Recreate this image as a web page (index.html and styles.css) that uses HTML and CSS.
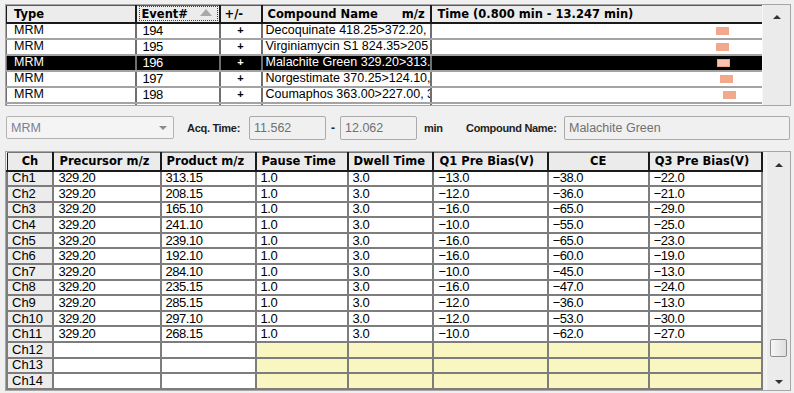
FILE: index.html
```html
<!DOCTYPE html>
<html>
<head>
<meta charset="utf-8">
<link rel="stylesheet" href="styles.css">
</head>
<body>
<div class="app">
  <div class="panel top-panel">
    <div class="grid-wrap">
      <table class="events">
        <colgroup><col class="c-type"><col class="c-event"><col class="c-pm"><col class="c-comp"><col class="c-time"></colgroup>
        <thead>
          <tr>
            <th class="h-type">Type</th>
            <th class="h-event"><span class="focus">Event#<svg class="sort" width="12" height="7" viewBox="0 0 12 7"><path d="M0 7 L6 0 L12 7 Z" fill="#a8a8a8"/></svg></span></th>
            <th class="h-pm">+/-</th>
            <th class="h-comp">Compound Name<span class="mz">m/z</span></th>
            <th class="h-time">Time (0.800 min - 13.247 min)</th>
          </tr>
        </thead>
        <tbody>
          <tr><td class="t">MRM</td><td class="n">194</td><td class="pm">+</td><td class="cp">Decoquinate 418.25&gt;372.20,</td><td class="tm"><div class="bar" style="margin-left:284px"></div></td></tr>
          <tr><td class="t">MRM</td><td class="n">195</td><td class="pm">+</td><td class="cp">Virginiamycin S1 824.35&gt;205</td><td class="tm"><div class="bar" style="margin-left:284px"></div></td></tr>
          <tr class="sel"><td class="t">MRM</td><td class="n">196</td><td class="pm">+</td><td class="cp">Malachite Green 329.20&gt;313.</td><td class="tm"><div class="bar" style="margin-left:285px"></div></td></tr>
          <tr><td class="t">MRM</td><td class="n">197</td><td class="pm">+</td><td class="cp">Norgestimate 370.25&gt;124.10,</td><td class="tm"><div class="bar" style="margin-left:288px"></div></td></tr>
          <tr><td class="t">MRM</td><td class="n">198</td><td class="pm">+</td><td class="cp">Coumaphos 363.00&gt;227.00, 3</td><td class="tm"><div class="bar" style="margin-left:291px"></div></td></tr>
          <tr><td class="t"></td><td class="n"></td><td class="pm"></td><td class="cp"></td><td class="tm"></td></tr>
        </tbody>
      </table>
    </div>
    <div class="vscroll top-scroll">
      <span class="arrow up"></span>
    </div>
  </div>

  <div class="controls">
    <div class="combo"><span class="val">MRM</span><span class="drop"></span></div>
    <span class="lbl lbl-acq">Acq. Time:</span>
    <div class="field f-time">11.562</div>
    <span class="dash">-</span>
    <div class="field f-time">12.062</div>
    <span class="lbl lbl-min">min</span>
    <span class="lbl lbl-cname">Compound Name:</span>
    <div class="field f-name">Malachite Green</div>
  </div>

  <div class="panel bottom-panel">
    <div class="grid-wrap">
      <table class="chans">
        <colgroup><col class="k-ch"><col class="k-pre"><col class="k-pro"><col class="k-pau"><col class="k-dwe"><col class="k-q1"><col class="k-ce"><col class="k-q3"></colgroup>
        <thead>
          <tr>
            <th class="ctr">Ch</th>
            <th>Precursor m/z</th>
            <th>Product m/z</th>
            <th>Pause Time</th>
            <th>Dwell Time</th>
            <th>Q1 Pre Bias(V)</th>
            <th class="ctr">CE</th>
            <th>Q3 Pre Bias(V)</th>
          </tr>
        </thead>
        <tbody>
          <tr><td class="ch">Ch1</td><td>329.20</td><td>313.15</td><td>1.0</td><td>3.0</td><td>−13.0</td><td>−38.0</td><td>−22.0</td></tr>
          <tr><td class="ch">Ch2</td><td>329.20</td><td>208.15</td><td>1.0</td><td>3.0</td><td>−12.0</td><td>−36.0</td><td>−21.0</td></tr>
          <tr><td class="ch">Ch3</td><td>329.20</td><td>165.10</td><td>1.0</td><td>3.0</td><td>−16.0</td><td>−65.0</td><td>−29.0</td></tr>
          <tr><td class="ch">Ch4</td><td>329.20</td><td>241.10</td><td>1.0</td><td>3.0</td><td>−10.0</td><td>−55.0</td><td>−25.0</td></tr>
          <tr><td class="ch">Ch5</td><td>329.20</td><td>239.10</td><td>1.0</td><td>3.0</td><td>−16.0</td><td>−65.0</td><td>−23.0</td></tr>
          <tr><td class="ch">Ch6</td><td>329.20</td><td>192.10</td><td>1.0</td><td>3.0</td><td>−16.0</td><td>−60.0</td><td>−19.0</td></tr>
          <tr><td class="ch">Ch7</td><td>329.20</td><td>284.10</td><td>1.0</td><td>3.0</td><td>−10.0</td><td>−45.0</td><td>−13.0</td></tr>
          <tr><td class="ch">Ch8</td><td>329.20</td><td>235.15</td><td>1.0</td><td>3.0</td><td>−16.0</td><td>−47.0</td><td>−24.0</td></tr>
          <tr><td class="ch">Ch9</td><td>329.20</td><td>285.15</td><td>1.0</td><td>3.0</td><td>−12.0</td><td>−36.0</td><td>−13.0</td></tr>
          <tr><td class="ch">Ch10</td><td>329.20</td><td>297.10</td><td>1.0</td><td>3.0</td><td>−12.0</td><td>−53.0</td><td>−30.0</td></tr>
          <tr><td class="ch">Ch11</td><td>329.20</td><td>268.15</td><td>1.0</td><td>3.0</td><td>−10.0</td><td>−62.0</td><td>−27.0</td></tr>
          <tr class="empty"><td class="ch">Ch12</td><td></td><td></td><td class="y"></td><td class="y"></td><td class="y"></td><td class="y"></td><td class="y"></td></tr>
          <tr class="empty"><td class="ch">Ch13</td><td></td><td></td><td class="y"></td><td class="y"></td><td class="y"></td><td class="y"></td><td class="y"></td></tr>
          <tr class="empty"><td class="ch">Ch14</td><td></td><td></td><td class="y"></td><td class="y"></td><td class="y"></td><td class="y"></td><td class="y"></td></tr>
        </tbody>
      </table>
    </div>
    <div class="vscroll bottom-scroll">
      <span class="arrow up"></span>
      <span class="track"><span class="thumb"></span></span>
      <span class="arrow down"></span>
    </div>
  </div>
</div>
</body>
</html>
```

FILE: styles.css
```css
* { box-sizing: border-box; }
html, body { margin: 0; padding: 0; }
body {
  width: 794px;
  height: 393px;
  overflow: hidden;
  background: #f0f0f0;
  font-family: "Liberation Sans", Arial, sans-serif;
  color: #000;
}
.app {
  padding: 4px 3px 0 5px;
  display: flex;
  flex-direction: column;
}
.panel {
  display: flex;
  border: 1px solid #a6a6a6;
  background: #f0f0f0;
}
.grid-wrap { overflow: hidden; }

/* ---------- top events table ---------- */
.top-panel { height: 102px; }
.top-panel .grid-wrap { width: 756px; height: 100px; }
.events {
  table-layout: fixed;
  border-collapse: collapse;
  width: 756px;
}
.c-type { width: 129px; }
.c-event { width: 84px; }
.c-pm { width: 42px; }
.c-comp { width: 169px; }
.c-time { width: 332px; }
.events th {
  height: 17px;
  padding: 0;
  line-height: 14px;
  background: #ececec;
  font-family: "DejaVu Sans", sans-serif;
  font-weight: bold;
  font-size: 11.5px;
  text-align: left;
  white-space: nowrap;
  overflow: hidden;
  border-left: 1px solid #1a1a1a;
  border-right: 2px solid #1a1a1a;
  border-bottom: 2px solid #1a1a1a;
  border-top: 1px solid #5a5a5a;
}
.events .h-type { padding-left: 7px; }
.events .h-event { padding-left: 2px; }
.focus {
  display: flex;
  align-items: center;
  height: 15px;
  padding-left: 2px;
  border: 1px dotted #444;
  margin-right: 1px;
}
.sort { margin-left: 12px; margin-top: -2px; }
.events .h-pm { padding-left: 4px; }
.events .h-comp { padding-left: 5px; }
.mz { margin-left: 24px; }
.events .h-time { padding-left: 6px; }
.events td {
  height: 16px;
  padding: 0;
  line-height: 13px;
  font-size: 12.5px;
  white-space: nowrap;
  overflow: hidden;
  background: #fff;
  border-right: 2px solid #6f6f6f;
  border-left: 1px solid #6f6f6f;
  border-bottom: 2px solid #a3a3a3;
}
.events td.t { padding-left: 7px; font-size: 12.5px; }
.events td.n { padding-left: 6px; font-size: 13px; letter-spacing: -0.5px; }
.events td.pm { text-align: center; font-weight: bold; font-size: 11px; }
.events td.cp { padding-left: 3px; }
.events tr.sel td { background: #000; color: #fff; }
.bar {
  width: 13px;
  height: 8px;
  background: #f2a88d;
}
.sel .bar { background: #f7c3b0; border: 1px solid #ef9f84; }

.vscroll {
  flex: none;
  display: flex;
  flex-direction: column;
  align-items: center;
  background: #ebebeb;
  border-left: 1px solid #f7f7f7;
}
.top-scroll { width: 28px; padding-top: 10px; }
.arrow {
  flex: none;
  width: 0;
  height: 0;
  border-left: 4px solid transparent;
  border-right: 4px solid transparent;
}
.arrow.up { border-bottom: 4px solid #333; }
.arrow.down { border-top: 4px solid #333; }

/* ---------- controls row ---------- */
.controls {
  display: flex;
  align-items: center;
  height: 25px;
  margin-top: 9px;
  font-size: 12px;
}
.combo {
  width: 168px;
  height: 23px;
  margin-left: 1px;
  border: 1px solid #b3b3b3;
  border-radius: 2px;
  background: #f4f4f4;
  display: flex;
  align-items: center;
  justify-content: space-between;
  padding: 0 6px 0 4px;
}
.combo .val { color: #7b7f96; font-size: 12.5px; }
.drop {
  width: 0; height: 0;
  border-left: 4px solid transparent;
  border-right: 4px solid transparent;
  border-top: 4px solid #8c8c8c;
}
.lbl {
  font-weight: bold;
  font-size: 11px;
  letter-spacing: -0.3px;
  color: #1e1e1e;
}
.lbl-acq { margin-left: 13px; width: 62px; }
.field {
  height: 24px;
  border: 1px solid #ababab;
  border-radius: 2px;
  background: #f0f0f0;
  color: #707070;
  font-size: 12.5px;
  display: flex;
  align-items: center;
  padding-left: 4px;
}
.f-time { width: 77px; }
.dash { width: 14px; text-align: center; font-weight: bold; color: #222; }
.lbl-min { margin-left: 7px; width: 42px; }
.lbl-cname { width: 98px; }
.f-name { width: 226px; }

/* ---------- bottom channel table ---------- */
.bottom-panel { margin-top: 11px; height: 240px; }
.bottom-panel .grid-wrap { width: 760px; height: 238px; }
.chans {
  table-layout: fixed;
  border-collapse: collapse;
  width: 757px;
}
.k-ch { width: 46px; }
.k-pre { width: 106px; }
.k-pro { width: 94px; }
.k-pau { width: 91px; }
.k-dwe { width: 85px; }
.k-q1 { width: 113px; }
.k-ce { width: 100px; }
.k-q3 { width: 112px; }
.chans th {
  height: 18px;
  padding: 0 0 0 5px;
  line-height: 14px;
  background: #ebebeb;
  font-family: "DejaVu Sans", sans-serif;
  font-weight: bold;
  font-size: 11.5px;
  text-align: left;
  white-space: nowrap;
  overflow: hidden;
  border-top: 1px solid #777;
  border-left: 1px solid #1a1a1a;
  border-right: 2px solid #1a1a1a;
  border-bottom: 2px solid #1a1a1a;
}
.chans th.ctr { text-align: center; padding: 0; }
.chans td {
  height: 15.6px;
  padding: 0 0 0 4px;
  line-height: 12px;
  background: #fff;
  font-size: 13px;
  letter-spacing: -0.5px;
  white-space: nowrap;
  overflow: hidden;
  border: 2px solid #7d7d7d;
}
.chans td.ch { background: #ececec; font-size: 13px; letter-spacing: 0; }
.chans td.y { background: #faf6c2; }

.bottom-scroll { width: 24px; margin-left: auto; padding: 11px 0 6px; }
.bottom-scroll .track {
  flex: 1;
  display: flex;
  flex-direction: column;
  justify-content: flex-end;
  padding-bottom: 23px;
}
.thumb {
  width: 17px;
  height: 18px;
  border: 1px solid #8e8e8e;
  border-radius: 2px;
  background: linear-gradient(90deg, #f6f6f6, #dedede);
}
```
